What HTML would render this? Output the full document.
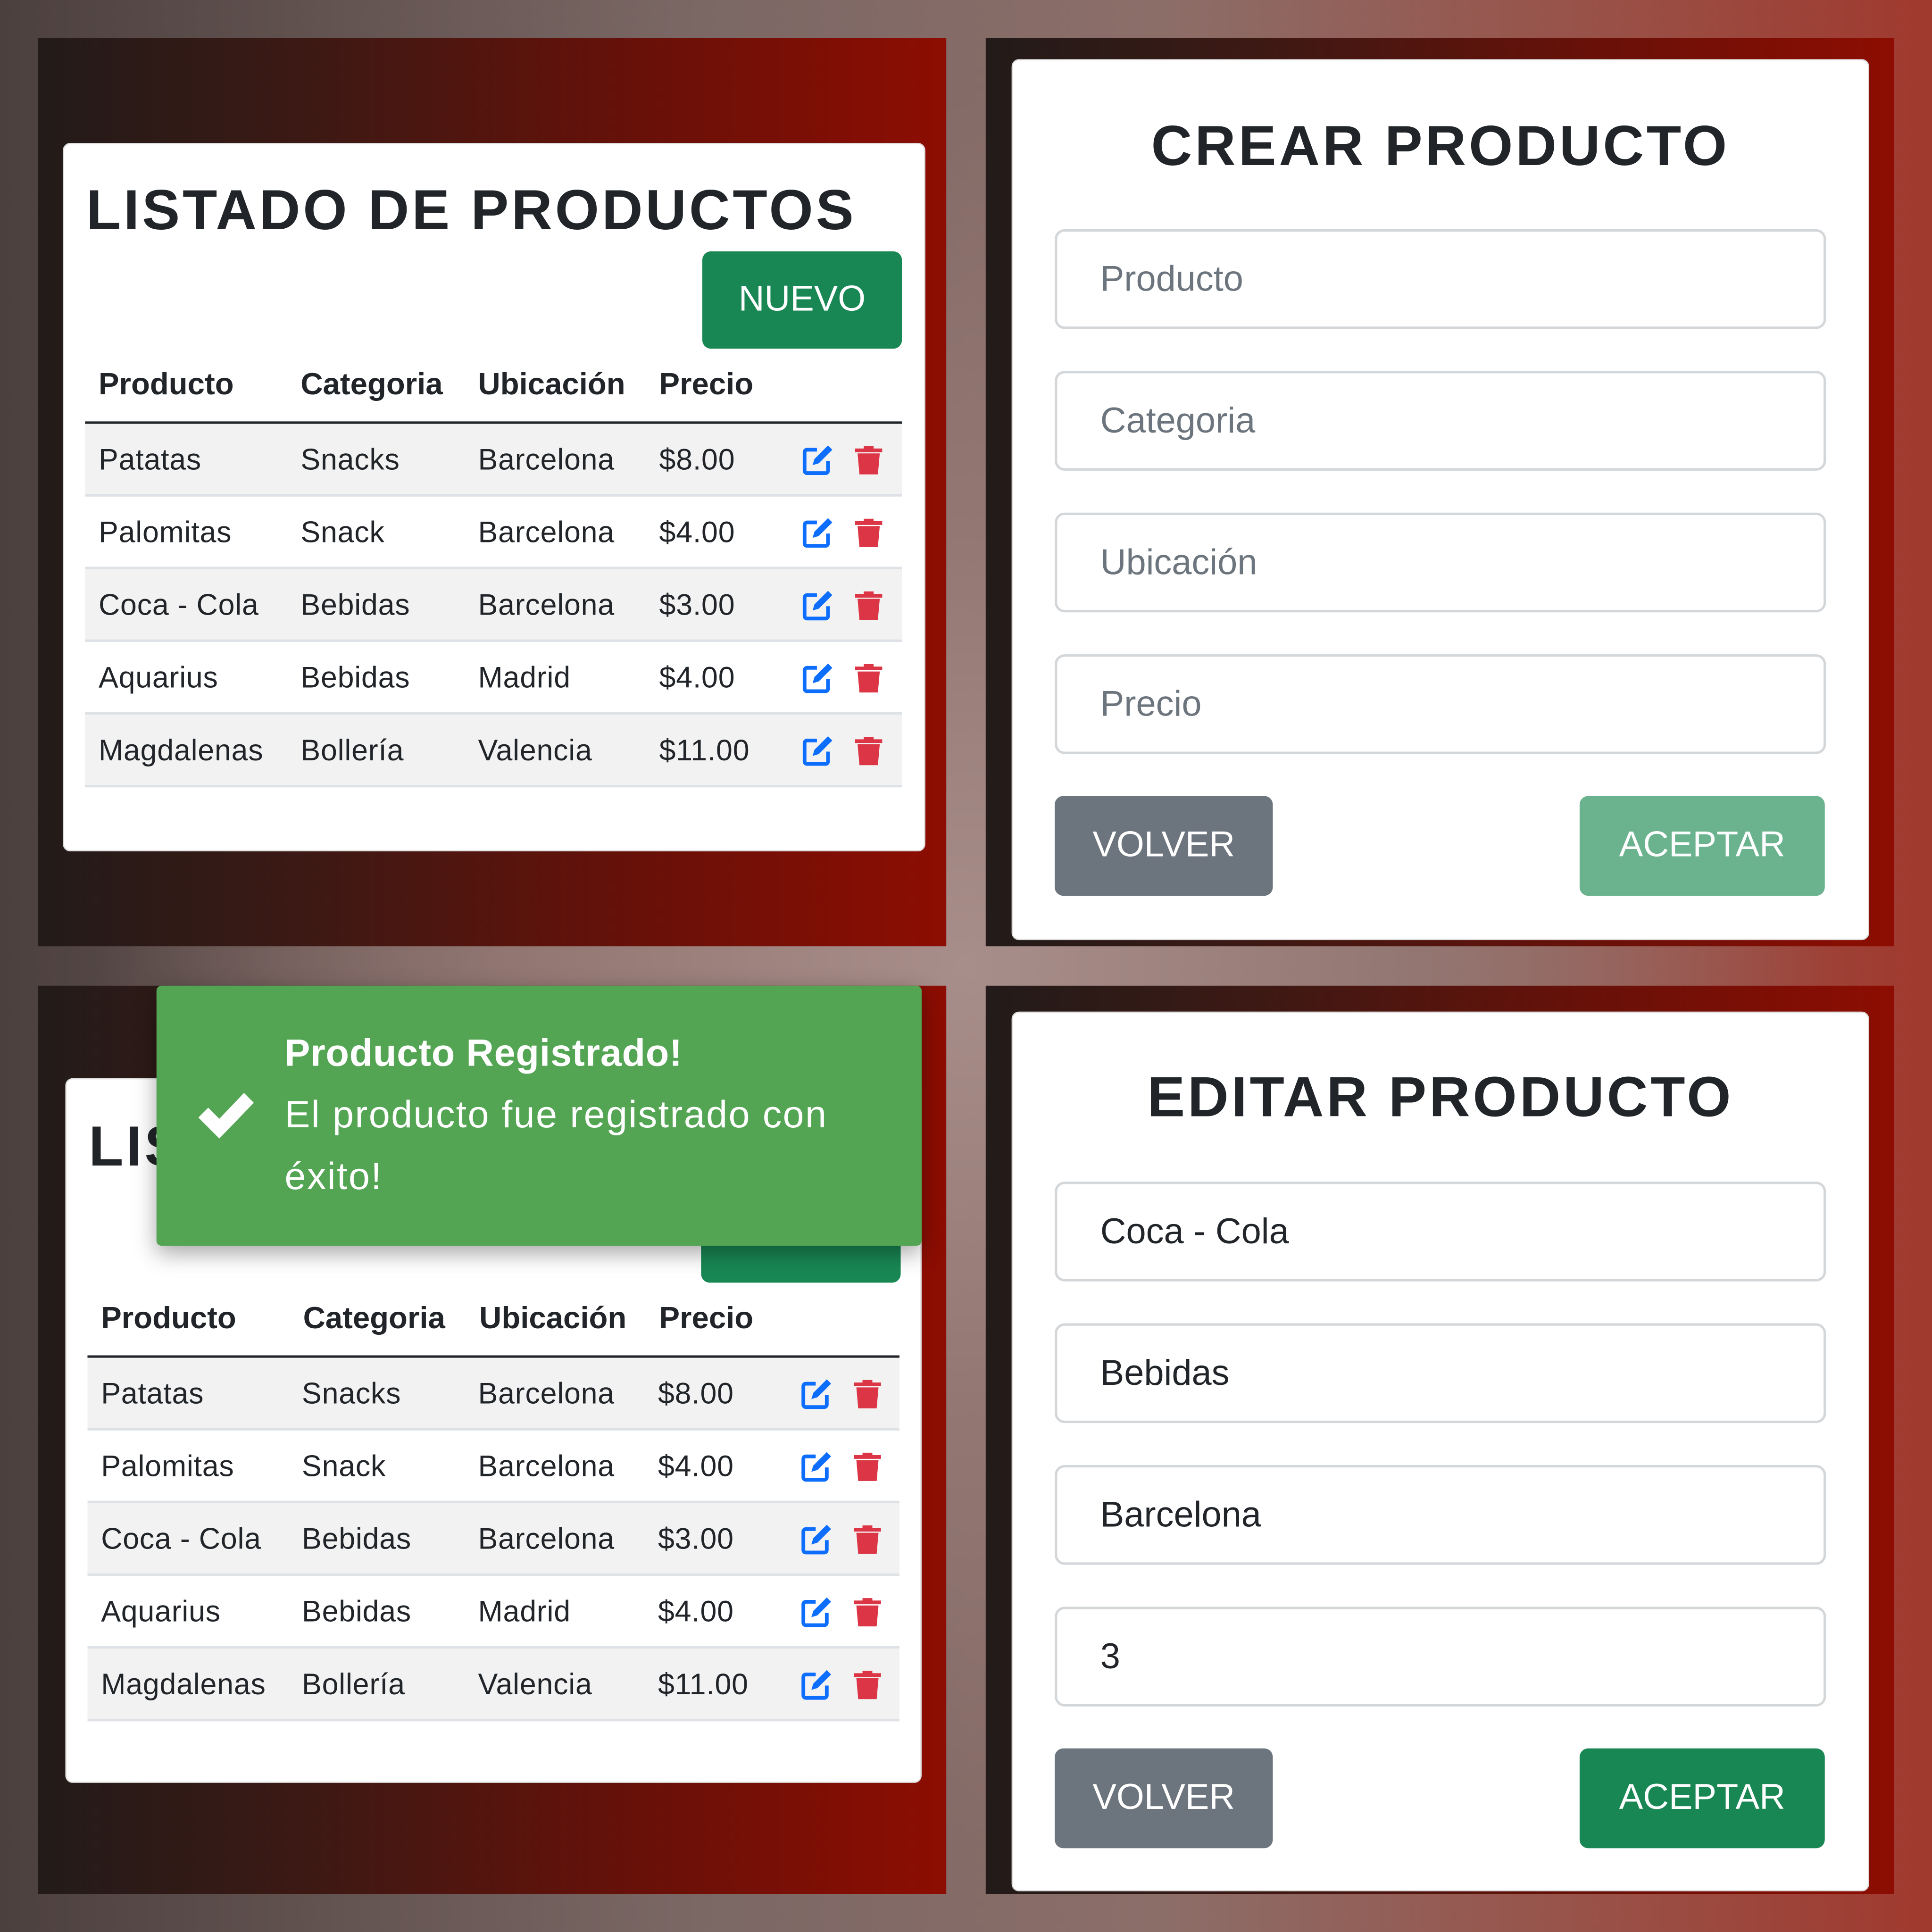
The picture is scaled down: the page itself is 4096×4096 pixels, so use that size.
<!DOCTYPE html>
<html><head><meta charset="utf-8"><style>
*{margin:0;padding:0;box-sizing:border-box}
html,body{width:4096px;height:4096px;overflow:hidden}
body{background:radial-gradient(ellipse 45% 45% at 50% 50%,#a88e8a 0%,#937773 50%,rgba(147,119,115,0) 100%),linear-gradient(90deg,#4c403e 0%,#7a6764 35%,#8c6e69 60%,#9a4e44 85%,#a0392e 100%);font-family:"Liberation Sans",sans-serif}
#s{position:absolute;left:0;top:0;width:1568px;height:1568px;transform:scale(2.612245);transform-origin:0 0}
.p{position:absolute;width:737px;height:737px;background:linear-gradient(90deg,#221b19 0%,#3d1914 30%,#661109 65%,#8d0d02 100%)}
.card{position:absolute;background:#fff;border:1px solid #ddd;border-radius:6px}
.ab{position:absolute;white-space:nowrap}
.h{font-weight:900;color:#212529;font-size:46px;letter-spacing:2.2px}
.row{position:absolute;height:59px;border-bottom:2px solid #dee2e6;font-size:24px;color:#212529;letter-spacing:0.3px}
.row.st{background:#f2f2f2}
.row span{position:absolute;top:16px;white-space:nowrap}
.hd{position:absolute;font-size:25px;font-weight:bold;color:#212529}
.hd span{position:absolute;white-space:nowrap}
.inp{position:absolute;left:856px;width:626px;height:81px;border:2px solid #d4d7da;border-radius:8px;background:#fff;font-size:29px;padding:23px 0 0 35px;color:#212529}
.ph{color:#6c757d}
.btn{position:absolute;height:81px;border-radius:7px;color:#fff;font-size:29px;text-align:center;line-height:81px}
.tt{color:#fff;font-size:31px;letter-spacing:0.9px}
</style></head><body><div id="s">

<svg width="0" height="0" style="position:absolute"><defs>
<symbol id="ed" viewBox="0 0 28 28"><path d="M13 6H5a2 2 0 0 0-2 2v15a2 2 0 0 0 2 2h15a2 2 0 0 0 2-2v-8" fill="none" stroke="#0d6efd" stroke-width="3"/><path d="M22 2.5l3.5 3.5-11 11-5 1.5 1.5-5z" fill="#0d6efd"/></symbol>
<symbol id="tr" viewBox="0 0 28 28"><path d="M3 5h22v3H3z M10 3h8v3h-8z" fill="#dc3545"/><path d="M5 9h18l-1.5 17h-15z" fill="#dc3545"/></symbol>
</defs></svg>

<!-- top left -->
<div class="p" style="left:31px;top:31px"></div>
<div class="card" style="left:51px;top:116px;width:700px;height:575px"></div>
<div class="ab h" style="left:70px;top:143px">LISTADO DE PRODUCTOS</div>
<div class="btn" style="left:570px;top:204px;width:162px;height:79px;line-height:79px;background:#198754">NUEVO</div>
<div class="hd" style="left:69px;top:298px"><span style="left:11px">Producto</span><span style="left:175px">Categoria</span><span style="left:319px">Ubicación</span><span style="left:466px">Precio</span></div>
<div style="position:absolute;left:69px;top:342px;width:663px;height:2px;background:#212529"></div>

<div class="row st" style="left:69px;top:344px;width:663px"><span style="left:11px">Patatas</span><span style="left:175px">Snacks</span><span style="left:319px">Barcelona</span><span style="left:466px">$8.00</span><svg style="position:absolute;left:581px;top:15px" width="28" height="28"><use href="#ed"/></svg><svg style="position:absolute;left:622px;top:15px" width="28" height="28"><use href="#tr"/></svg></div>
<div class="row" style="left:69px;top:403px;width:663px"><span style="left:11px">Palomitas</span><span style="left:175px">Snack</span><span style="left:319px">Barcelona</span><span style="left:466px">$4.00</span><svg style="position:absolute;left:581px;top:15px" width="28" height="28"><use href="#ed"/></svg><svg style="position:absolute;left:622px;top:15px" width="28" height="28"><use href="#tr"/></svg></div>
<div class="row st" style="left:69px;top:462px;width:663px"><span style="left:11px">Coca - Cola</span><span style="left:175px">Bebidas</span><span style="left:319px">Barcelona</span><span style="left:466px">$3.00</span><svg style="position:absolute;left:581px;top:15px" width="28" height="28"><use href="#ed"/></svg><svg style="position:absolute;left:622px;top:15px" width="28" height="28"><use href="#tr"/></svg></div>
<div class="row" style="left:69px;top:521px;width:663px"><span style="left:11px">Aquarius</span><span style="left:175px">Bebidas</span><span style="left:319px">Madrid</span><span style="left:466px">$4.00</span><svg style="position:absolute;left:581px;top:15px" width="28" height="28"><use href="#ed"/></svg><svg style="position:absolute;left:622px;top:15px" width="28" height="28"><use href="#tr"/></svg></div>
<div class="row st" style="left:69px;top:580px;width:663px"><span style="left:11px">Magdalenas</span><span style="left:175px">Bollería</span><span style="left:319px">Valencia</span><span style="left:466px">$11.00</span><svg style="position:absolute;left:581px;top:15px" width="28" height="28"><use href="#ed"/></svg><svg style="position:absolute;left:622px;top:15px" width="28" height="28"><use href="#tr"/></svg></div>

<!-- top right -->
<div class="p" style="left:800px;top:31px"></div>
<div class="card" style="left:821px;top:48px;width:696px;height:715px"></div>
<div class="ab h" style="left:821px;width:696px;text-align:center;top:91px">CREAR PRODUCTO</div>
<div class="inp ph" style="top:186px">Producto</div>
<div class="inp ph" style="top:301px">Categoria</div>
<div class="inp ph" style="top:416px">Ubicación</div>
<div class="inp ph" style="top:531px">Precio</div>
<div class="btn" style="left:856px;top:646px;width:177px;background:#6c757d">VOLVER</div>
<div class="btn" style="left:1282px;top:646px;width:199px;background:#6bb38f">ACEPTAR</div>

<!-- bottom left -->
<div class="p" style="left:31px;top:800px"></div>
<div class="card" style="left:53px;top:875px;width:695px;height:572px"></div>
<div class="ab h" style="left:72px;top:903px">LISTADO DE PRODUCTOS</div>
<div class="btn" style="left:569px;top:962px;width:162px;height:79px;line-height:79px;background:#198754;color:#cfe">NUEVO</div>
<div class="hd" style="left:71px;top:1056px"><span style="left:11px">Producto</span><span style="left:175px">Categoria</span><span style="left:318px">Ubicación</span><span style="left:464px">Precio</span></div>
<div style="position:absolute;left:71px;top:1100px;width:659px;height:2px;background:#212529"></div>

<div class="row st" style="left:71px;top:1102px;width:659px"><span style="left:11px">Patatas</span><span style="left:174px">Snacks</span><span style="left:317px">Barcelona</span><span style="left:463px">$8.00</span><svg style="position:absolute;left:578px;top:15px" width="28" height="28"><use href="#ed"/></svg><svg style="position:absolute;left:619px;top:15px" width="28" height="28"><use href="#tr"/></svg></div>
<div class="row" style="left:71px;top:1161px;width:659px"><span style="left:11px">Palomitas</span><span style="left:174px">Snack</span><span style="left:317px">Barcelona</span><span style="left:463px">$4.00</span><svg style="position:absolute;left:578px;top:15px" width="28" height="28"><use href="#ed"/></svg><svg style="position:absolute;left:619px;top:15px" width="28" height="28"><use href="#tr"/></svg></div>
<div class="row st" style="left:71px;top:1220px;width:659px"><span style="left:11px">Coca - Cola</span><span style="left:174px">Bebidas</span><span style="left:317px">Barcelona</span><span style="left:463px">$3.00</span><svg style="position:absolute;left:578px;top:15px" width="28" height="28"><use href="#ed"/></svg><svg style="position:absolute;left:619px;top:15px" width="28" height="28"><use href="#tr"/></svg></div>
<div class="row" style="left:71px;top:1279px;width:659px"><span style="left:11px">Aquarius</span><span style="left:174px">Bebidas</span><span style="left:317px">Madrid</span><span style="left:463px">$4.00</span><svg style="position:absolute;left:578px;top:15px" width="28" height="28"><use href="#ed"/></svg><svg style="position:absolute;left:619px;top:15px" width="28" height="28"><use href="#tr"/></svg></div>
<div class="row st" style="left:71px;top:1338px;width:659px"><span style="left:11px">Magdalenas</span><span style="left:174px">Bollería</span><span style="left:317px">Valencia</span><span style="left:463px">$11.00</span><svg style="position:absolute;left:578px;top:15px" width="28" height="28"><use href="#ed"/></svg><svg style="position:absolute;left:619px;top:15px" width="28" height="28"><use href="#tr"/></svg></div>

<div style="position:absolute;left:127px;top:800px;width:621px;height:211px;background:#53a553;border-radius:4px;box-shadow:0 6px 18px rgba(0,0,0,0.35)"></div>
<svg style="position:absolute;left:158px;top:885px" width="50" height="42" viewBox="0 0 50 42"><path d="M3 22l8-8 9 9L40 2l8 8-28 29z" fill="#fff"/></svg>
<div class="ab tt" style="left:231px;top:837px;font-weight:bold;letter-spacing:0.3px">Producto Registrado!</div>
<div class="ab tt" style="left:231px;top:887px">El producto fue registrado con</div>
<div class="ab tt" style="left:231px;top:937px">éxito!</div>

<!-- bottom right -->
<div class="p" style="left:800px;top:800px"></div>
<div class="card" style="left:821px;top:821px;width:696px;height:714px"></div>
<div class="ab h" style="left:821px;width:696px;text-align:center;top:863px">EDITAR PRODUCTO</div>
<div class="inp" style="top:959px">Coca - Cola</div>
<div class="inp" style="top:1074px">Bebidas</div>
<div class="inp" style="top:1189px">Barcelona</div>
<div class="inp" style="top:1304px">3</div>
<div class="btn" style="left:856px;top:1419px;width:177px;background:#6c757d">VOLVER</div>
<div class="btn" style="left:1282px;top:1419px;width:199px;background:#198754">ACEPTAR</div>

</div></body></html>
